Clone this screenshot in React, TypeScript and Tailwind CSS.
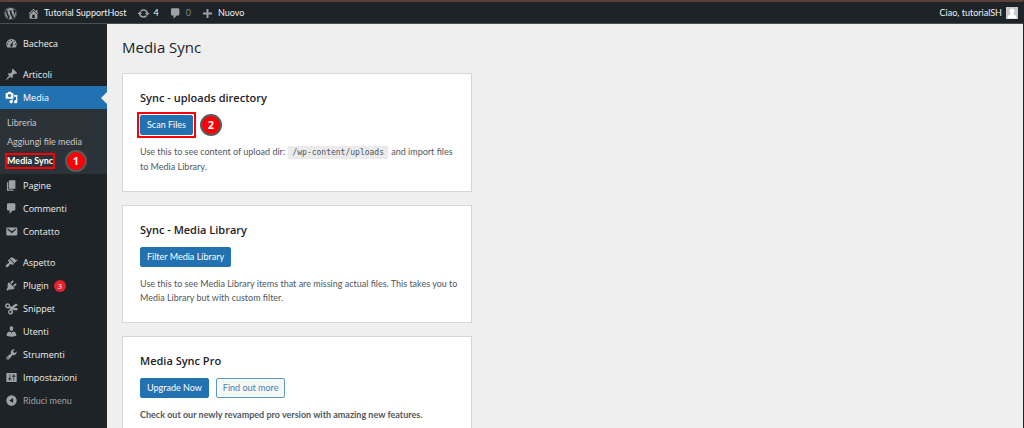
import type { ReactNode } from 'react'
import { FaWordpress } from 'react-icons/fa'
import clsx from 'clsx'

const ICONS = {
  dashboard:
    'M3.76 16h12.48c1.1-1.37 1.76-3.11 1.76-5 0-4.42-3.58-8-8-8s-8 3.58-8 8c0 1.89.66 3.63 1.76 5zM10 4c.55 0 1 .45 1 1s-.45 1-1 1-1-.45-1-1 .45-1 1-1zM6 6c.55 0 1 .45 1 1s-.45 1-1 1-1-.45-1-1 .45-1 1-1zm8 0c.55 0 1 .45 1 1s-.45 1-1 1-1-.45-1-1 .45-1 1-1zm-5.37 5.55L12 7v6c0 1.1-.9 2-2 2s-2-.9-2-2c0-.57.24-1.08.63-1.45zM4 10c.55 0 1 .45 1 1s-.45 1-1 1-1-.45-1-1 .45-1 1-1zm12 0c.55 0 1 .45 1 1s-.45 1-1 1-1-.45-1-1 .45-1 1-1z',
  post: 'M10.44 3.02l1.82-1.82 6.36 6.35-1.83 1.82c-1.05-.68-2.48-.57-3.41.36l-.75.75c-.92.93-1.04 2.35-.35 3.41l-1.83 1.82-2.41-2.41-2.8 2.79c-.42.42-3.38 2.71-3.8 2.29s1.86-3.39 2.28-3.81l2.79-2.79L4.1 9.36l1.83-1.82c1.05.69 2.48.57 3.4-.36l.75-.75c.93-.92 1.05-2.35.36-3.41z',
  media:
    'M13 11V4c0-.55-.45-1-1-1h-1.67L9 1H5L3.67 3H2c-.55 0-1 .45-1 1v7c0 .55.45 1 1 1h10c.55 0 1-.45 1-1zM7 4.5c1.38 0 2.5 1.12 2.5 2.5S8.38 9.5 7 9.5 4.5 8.38 4.5 7 5.62 4.5 7 4.5zM14 6h5v10.5c0 1.38-1.12 2.5-2.5 2.5S14 17.88 14 16.5s1.12-2.5 2.5-2.5c.17 0 .34.02.5.05V9h-3V6zm-4 8.05V13h2v3.5c0 1.38-1.12 2.5-2.5 2.5S7 17.88 7 16.5 8.12 14 9.5 14c.17 0 .34.02.5.05z',
  page: 'M6 15V2h10v13H6zm-1 1h8v2H3V5h2v11z',
  comments:
    'M5 2h9c1.1 0 2 .9 2 2v7c0 1.1-.9 2-2 2h-2l-5 5v-5H5c-1.1 0-2-.9-2-2V4c0-1.1.9-2 2-2z',
  email:
    'M3.87 4h13.25C18.37 4 19 4.59 19 5.79v8.42c0 1.19-.63 1.79-1.88 1.79H3.87c-1.25 0-1.88-.6-1.88-1.79V5.79c0-1.2.63-1.79 1.88-1.79zm6.62 8.6l6.74-5.53c.24-.2.43-.66.13-1.07-.29-.41-.82-.42-1.17-.17l-5.7 3.86L4.8 5.83c-.35-.25-.88-.24-1.17.17-.3.41-.11.87.13 1.07z',
  appearance:
    'M14.48 11.06L7.41 3.99l1.5-1.5c.5-.56 2.3-.47 3.51.32 1.21.8 1.43 1.28 2.91 2.1 1.18.64 2.45 1.26 4.45.85zm-.71.71L6.7 4.7 4.93 6.47c-.39.39-.39 1.02 0 1.41l1.06 1.06c.39.39.39 1.03 0 1.42-.6.6-1.43 1.11-2.21 1.69-.35.26-.7.53-1.01.84C1.43 14.23.4 16.08 1.4 17.07c.99 1 2.84-.03 4.18-1.36.31-.31.58-.66.85-1.02.57-.78 1.08-1.61 1.69-2.21.39-.39 1.02-.39 1.41 0l1.06 1.06c.39.39 1.02.39 1.41 0z',
  plugins:
    'M13.11 4.36L9.87 7.6 8 5.73l3.24-3.24c.35-.34 1.05-.2 1.56.32.52.51.66 1.21.31 1.55zm-8 1.77l.91-1.12 9.01 9.01-1.19.84c-.71.71-2.63 1.16-3.82 1.16H6.14L4.9 17.26c-.59.59-1.54.59-2.12 0-.59-.58-.59-1.53 0-2.12l1.24-1.24v-3.88c0-1.13.4-3.19 1.09-3.89zm7.26 3.97l3.24-3.24c.34-.35 1.04-.21 1.55.31.52.51.66 1.21.31 1.55l-3.24 3.25z',
  snippet:
    'M4 2a4 4 0 0 1 3.9 4.7l1.8.6L16.5 2.5c1.8 0 3 1 3 2.6L13.5 9l6 .8c.3 1.8-.6 3-2.3 3.2l-5.7-1.2-.3.5A4 4 0 1 1 7.4 11.5l.9-1.5L6 9.5A4 4 0 1 1 4 2zm0 2.3a1.7 1.7 0 1 0 0 3.4 1.7 1.7 0 0 0 0-3.4zm4.2 9.3a1.7 1.7 0 1 0 0 3.4 1.7 1.7 0 0 0 0-3.4z',
  users:
    'M10 9.25c-2.27 0-2.73-3.44-2.73-3.44C7 4.02 7.82 2 9.97 2c2.16 0 2.98 2.02 2.71 3.81 0 0-.41 3.44-2.68 3.44zm0 2.57L12.72 10c2.39 0 4.52 2.33 4.52 4.53v2.49s-3.65 1.13-7.24 1.13c-3.65 0-7.24-1.13-7.24-1.13v-2.49c0-2.25 1.94-4.48 4.47-4.48z',
  tools:
    'M16.68 9.77c-1.34 1.34-3.3 1.67-4.95.99l-5.41 6.52c-.99.99-2.59.99-3.58 0s-.99-2.59 0-3.57l6.52-5.42c-.68-1.65-.35-3.61.99-4.95 1.28-1.28 3.12-1.62 4.72-1.06l-2.89 2.89 2.82 2.82 2.86-2.87c.53 1.58.18 3.39-1.08 4.65zM3.81 16.21c.4.39 1.04.39 1.43 0 .4-.4.4-1.04 0-1.43-.39-.4-1.03-.4-1.43 0-.39.39-.39 1.03 0 1.43z',
  settings:
    'M18 16V4c0-.55-.45-1-1-1H3c-.55 0-1 .45-1 1v12c0 .55.45 1 1 1h14c.55 0 1-.45 1-1zM8 11h1c.55 0 1 .45 1 1s-.45 1-1 1H8v1.5c0 .28-.22.5-.5.5s-.5-.22-.5-.5V13H6c-.55 0-1-.45-1-1s.45-1 1-1h1V5.5c0-.28.22-.5.5-.5s.5.22.5.5V11zm5-2h-1c-.55 0-1-.45-1-1s.45-1 1-1h1V5.5c0-.28.22-.5.5-.5s.5.22.5.5V7h1c.55 0 1 .45 1 1s-.45 1-1 1h-1v5.5c0 .28-.22.5-.5.5s-.5-.22-.5-.5V9z',
  collapse: 'M10 2a8 8 0 1 0 0 16 8 8 0 0 0 0-16zm2.5 12L6.5 10l6-4v8z',
  home: 'M16 8.5l1.53 1.53-1.06 1.06L10 4.6l-6.47 6.49-1.06-1.06L10 2.5l4 4v-2h2v4zm-6-2.46l6 5.99V18H4v-5.97zM12 17v-5H8v5h4z',
  update:
    'M10.2 3.28c3.53 0 6.43 2.61 6.92 6h2.08l-3.5 4-3.5-4h2.32c-.45-1.97-2.21-3.45-4.32-3.45-1.45 0-2.73.71-3.54 1.78L4.95 5.66C6.23 4.2 8.11 3.28 10.2 3.28zm-.4 13.44c-3.52 0-6.43-2.61-6.92-6H.8l3.5-4c1.17 1.33 2.33 2.67 3.5 4H5.48c.45 1.97 2.21 3.45 4.32 3.45 1.45 0 2.73-.71 3.54-1.78l1.71 1.95c-1.28 1.46-3.15 2.38-5.25 2.38z',
  plus: 'M8.5 3h3v5.5H17v3h-5.5V17h-3v-5.5H3v-3h5.5z',
}

type IconName = keyof typeof ICONS

interface MenuEntry {
  label: string
  icon: IconName
  count?: number
}

const contentMenu: MenuEntry[] = [
  { label: 'Pagine', icon: 'page' },
  { label: 'Commenti', icon: 'comments' },
  { label: 'Contatto', icon: 'email' },
]

const adminMenu: MenuEntry[] = [
  { label: 'Aspetto', icon: 'appearance' },
  { label: 'Plugin', icon: 'plugins', count: 3 },
  { label: 'Snippet', icon: 'snippet' },
  { label: 'Utenti', icon: 'users' },
  { label: 'Strumenti', icon: 'tools' },
  { label: 'Impostazioni', icon: 'settings' },
]

function Icon({ name, className }: { name: IconName; className?: string }) {
  return (
    <svg
      viewBox="0 0 20 20"
      fill="currentColor"
      fillRule="evenodd"
      aria-hidden="true"
      className={clsx('h-[13px] w-[13px] shrink-0', className)}
    >
      <path d={ICONS[name]} />
    </svg>
  )
}

function MenuItem({ label, icon, count }: MenuEntry) {
  return (
    <li>
      <a href="#" className="flex h-[23px] items-center gap-[5px] pl-[5px]">
        <Icon name={icon} className="text-[#9ca2a7]" />
        {label}
        {count && (
          <span className="flex h-3 w-3 items-center justify-center rounded-full bg-[#e8202a] text-[8px] text-white">
            {count}
          </span>
        )}
      </a>
    </li>
  )
}

function Marker({ step, className }: { step: number; className: string }) {
  return (
    <span
      className={clsx(
        "absolute flex h-[22px] w-[22px] items-center justify-center rounded-full border-2 border-[#5b5b5b] bg-[#fb0007] font-['Open_Sans',sans-serif] text-[11px] font-bold text-white",
        className
      )}
    >
      {step}
    </span>
  )
}

function Card({ title, children }: { title: string; children: ReactNode }) {
  return (
    <section className="w-full max-w-[350px] border border-[#d5d6d8] bg-white py-[17px] pr-3 pl-[17px]">
      <h2 className="font-['Open_Sans',sans-serif] text-[11px] leading-[14px] font-semibold text-[#1d2327]">
        {title}
      </h2>
      {children}
    </section>
  )
}

function Button({ children, outline }: { children: ReactNode; outline?: boolean }) {
  return (
    <button
      type="button"
      className={clsx(
        'h-5 rounded-[2px] border px-[6px] text-[9px] leading-4',
        outline ? 'border-[#5d97c4] bg-[#f6f7f7] text-[#3f82b5]' : 'border-[#2271b1] bg-[#2271b1] text-white'
      )}
    >
      {children}
    </button>
  )
}

export default function App() {
  return (
    <div className="flex h-screen flex-col overflow-hidden border-t-2 border-r border-t-[#5a403a] border-r-[#1d2327] bg-[#efefef] font-['Lato','Noto_Sans',sans-serif] text-[9px]">
      <header className="flex h-[22px] shrink-0 items-center border-b border-[#4a4e51] bg-[#1d2327] pt-px pr-[5px] pl-1 text-[#f0f0f1]">
        <a href="#" aria-label="WordPress">
          <FaWordpress className="h-[13px] w-[13px] text-[#9ca2a7]" />
        </a>
        <a href="#" className="ml-[10px] flex items-center gap-1">
          <Icon name="home" className="text-[#9ca2a7]" />
          Tutorial SupportHost
        </a>
        <a href="#" className="ml-[10px] flex items-center gap-1">
          <Icon name="update" className="text-[#9ca2a7]" />4
        </a>
        <a href="#" className="ml-[10px] flex items-center gap-1 text-[#85898c]">
          <Icon name="comments" className="text-[#9ca2a7]" />0
        </a>
        <a href="#" className="ml-[10px] flex items-center gap-1">
          <Icon name="plus" className="text-[#9ca2a7]" />
          Nuovo
        </a>
        <a href="#" className="ml-auto flex items-center gap-1">
          Ciao, tutorialSH
          <svg viewBox="0 0 12 12" className="h-3 w-3" aria-hidden="true">
            <path fill="#c8c8c8" d="M0 0h12v12H0z" />
            <path fill="#fff" d="M6 1.5a2.5 2.5 0 0 1 1.5 4.5v1.2c1.5.3 3 1.3 3 4.3h-9c0-3 1.5-4 3-4.3V6A2.5 2.5 0 0 1 6 1.5z" />
          </svg>
        </a>
      </header>

      <div className="flex min-h-0 flex-1">
        <nav className="w-[107px] shrink-0 bg-[#1d2327] pt-2 font-['Open_Sans','Noto_Sans',sans-serif] text-[#f0f0f1]">
          <ul>
            <MenuItem label="Bacheca" icon="dashboard" />
          </ul>
          <ul className="mt-2">
            <MenuItem label="Articoli" icon="post" />
            <li>
              <a
                href="#"
                className="relative flex h-[23px] items-center gap-[5px] bg-[#2271b1] pl-[5px] text-white"
              >
                <Icon name="media" />
                Media
                <svg viewBox="0 0 6 12" className="absolute right-0 h-3 w-[6px]" aria-hidden="true">
                  <path fill="#efefef" d="M6 0v12L0 6z" />
                </svg>
              </a>
              <ul className="bg-[#2c3338] py-1 font-['Lato','Noto_Sans',sans-serif] leading-[19px] text-[#c3c6c9]">
                <li className="pl-[7px]">
                  <a href="#">Libreria</a>
                </li>
                <li className="pl-[7px]">
                  <a href="#">Aggiungi file media</a>
                </li>
                <li className="relative flex h-[19px] items-center pl-[7px]">
                  <a href="#" className="leading-3 font-bold text-white outline-2 outline-[#fb0007]">
                    Media Sync
                  </a>
                  <Marker step={1} className="left-[65px]" />
                </li>
              </ul>
            </li>
            {contentMenu.map(item => (
              <MenuItem key={item.label} {...item} />
            ))}
          </ul>
          <ul className="mt-2">
            {adminMenu.map(item => (
              <MenuItem key={item.label} {...item} />
            ))}
            <li>
              <button
                type="button"
                className="flex h-[23px] items-center gap-[5px] pl-[5px] font-['Lato','Noto_Sans',sans-serif] text-[#9ca2a7]"
              >
                <Icon name="collapse" />
                Riduci menu
              </button>
            </li>
          </ul>
        </nav>

        <main className="min-w-0 flex-1 pt-3 pl-[15px]">
          <h1 className="font-['Open_Sans',sans-serif] text-[15px] leading-[22px] text-[#1d2327]">Media Sync</h1>

          <div className="mt-[15px] flex flex-col gap-[13px] leading-[14px] text-[#50575e]">
            <Card title="Sync - uploads directory">
              <div className="relative mt-[10px] flex items-center">
                <span className="flex outline-2 outline-offset-1 outline-[#fb0007]">
                  <Button>Scan Files</Button>
                </span>
                <Marker step={2} className="left-[60px]" />
              </div>
              <p className="mt-[10px]">
                Use this to see content of upload dir:{' '}
                <code className="mx-px bg-[#ebebec] px-1 py-[2px] font-['DejaVu_Sans_Mono',monospace] text-[8px]">
                  /wp-content/uploads
                </code>{' '}
                and import files to Media Library.
              </p>
            </Card>

            <Card title="Sync - Media Library">
              <div className="mt-[10px] flex">
                <Button>Filter Media Library</Button>
              </div>
              <p className="mt-[10px]">
                Use this to see Media Library items that are missing actual files. This takes you to Media
                Library but with custom filter.
              </p>
            </Card>

            <Card title="Media Sync Pro">
              <div className="mt-[10px] flex gap-[7px]">
                <Button>Upgrade Now</Button>
                <Button outline>Find out more</Button>
              </div>
              <p className="mt-[10px] font-bold">
                Check out our newly revamped pro version with amazing new features.
              </p>
            </Card>
          </div>
        </main>
      </div>
    </div>
  )
}
